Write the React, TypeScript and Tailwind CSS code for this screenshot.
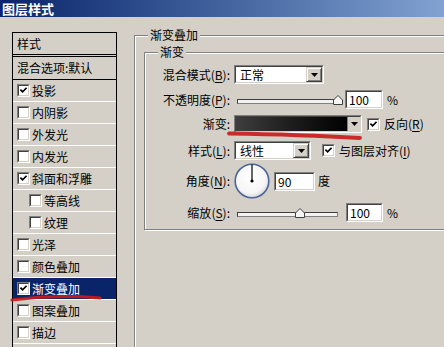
import type { ReactNode } from 'react'
import clsx from 'clsx'

const ITEMS = [
  { label: '投影', on: true },
  { label: '内阴影' },
  { label: '外发光' },
  { label: '内发光' },
  { label: '斜面和浮雕', on: true },
  { label: '等高线', indent: true },
  { label: '纹理', indent: true },
  { label: '光泽' },
  { label: '颜色叠加' },
  { label: '渐变叠加', on: true, active: true },
  { label: '图案叠加' },
  { label: '描边' },
]

function Check({ on }: { on?: boolean }) {
  return (
    <span className="flex h-[13px] w-[13px] shrink-0 border border-t-[#808080] border-l-[#808080] border-b-white border-r-white">
      <span className="flex flex-1 items-center justify-center bg-white border border-t-[#404040] border-l-[#404040] border-b-[#d4d0c8] border-r-[#d4d0c8]">
        {on && (
          <svg width="7" height="7" viewBox="0 0 7 7">
            <path d="M0.4 2.6 L2.6 4.9 L6.6 0.8" stroke="#000" strokeWidth="1.7" fill="none" />
          </svg>
        )}
      </span>
    </span>
  )
}

function Sunken({ className, children }: { className?: string; children?: ReactNode }) {
  return (
    <div className={clsx('flex shrink-0 border border-t-[#808080] border-l-[#808080] border-b-white border-r-white', className)}>
      <div className="flex flex-1 min-w-0 bg-white border border-t-[#404040] border-l-[#404040] border-b-[#d4d0c8] border-r-[#d4d0c8]">
        {children}
      </div>
    </div>
  )
}

function Arrow() {
  return (
    <svg width="7" height="4" viewBox="0 0 7 4">
      <path d="M0 0h7L3.5 4z" fill="#000" />
    </svg>
  )
}

function DropBtn() {
  return (
    <span className="flex w-[16px] shrink-0 items-center justify-center bg-[#d4d0c8] border border-t-[#d4d0c8] border-l-[#d4d0c8] border-r-[#404040] border-b-[#404040] shadow-[inset_1px_1px_0_#fff,inset_-1px_-1px_0_#808080]">
      <Arrow />
    </span>
  )
}

function Select({ value, className }: { value: string; className: string }) {
  return (
    <Sunken className={clsx('h-[19px]', className)}>
      <span className="flex-1 pl-[4px] leading-[15px]">{value}</span>
      <DropBtn />
    </Sunken>
  )
}

function Field({ value, className }: { value: string; className: string }) {
  return (
    <Sunken className={clsx('h-[19px]', className)}>
      <span className="pl-[2px] leading-[15px]">{value}</span>
    </Sunken>
  )
}

function Slider({ pos }: { pos: number }) {
  return (
    <div className="relative ml-[3px] flex h-[19px] w-[101px] shrink-0 items-center">
      <div className="mt-[3px] h-[5px] w-full bg-[#f2f2f2] border border-t-[#404040] border-l-[#404040] border-b-[#808080] border-r-[#808080]" />
      <svg
        className="absolute top-[5px]"
        style={{ left: pos }}
        width="10"
        height="10"
        viewBox="0 0 10 10"
      >
        <path d="M0.5 9.5 V5 L5 0.5 L9.5 5 V9.5 Z" fill="#f4f4f4" stroke="#404040" />
      </svg>
    </div>
  )
}

function Label({ text, k }: { text: string; k?: string }) {
  return (
    <span className="w-[85px] shrink-0 text-right">
      {text}
      {k && (
        <>
          (<span className="underline underline-offset-2">{k}</span>)
        </>
      )}
      :
    </span>
  )
}

function Group({ title, className, children }: { title: string; className: string; children?: ReactNode }) {
  return (
    <div className={clsx('relative border border-[#808080] shadow-[inset_1px_1px_0_#fff,1px_1px_0_#fff]', className)}>
      <span className="absolute -top-[9px] left-[13px] bg-[#d4d0c8] px-[2px] leading-[16px]">{title}</span>
      {children}
    </div>
  )
}

export default function App() {
  return (
    <div className="relative h-[347px] w-[444px] overflow-hidden bg-[#d4d0c8] text-[12px] leading-[16px] text-black font-['Noto_Sans_CJK_SC',sans-serif]">
      <div className="flex h-[17px] items-center bg-linear-to-r from-[#0a246a] to-[#82a2d2] pl-[2px] text-[13px] font-bold text-white">
        图层样式
      </div>

      <div className="flex">
        {/* style list */}
        <div className="ml-[12px] mt-[15px] h-[330px] w-[105px] shrink-0 border border-black">
          <div className="flex h-[22px] items-center border-b border-black pl-[4px]">样式</div>
          <div className="mt-[1px] flex h-[24px] items-center border-y border-black pl-[4px]">混合选项:默认</div>
          {ITEMS.map((it) => (
            <div
              key={it.label}
              className={clsx(
                'flex h-[22px] items-center gap-[2px] border-b border-white',
                it.indent ? 'pl-[16px]' : 'pl-[4px]',
                it.active && 'bg-[#0a246a] text-white',
              )}
            >
              <Check on={it.on} />
              <span>{it.label}</span>
            </div>
          ))}
        </div>

        {/* settings */}
        <Group title="渐变叠加" className="ml-[17px] mt-[18px] h-[340px] w-[320px] shrink-0">
          <Group title="渐变" className="ml-[9px] mt-[16px] h-[178px] w-[310px]">
            <div className="mt-[12px] flex flex-col">
              <div className="flex h-[19px] items-center">
                <Label text="混合模式" k="B" />
                <Select value="正常" className="ml-[4px] w-[90px]" />
              </div>

              <div className="mt-[6px] flex h-[19px] items-center">
                <Label text="不透明度" k="P" />
                <div className="ml-[4px] flex items-center">
                  <Slider pos={96} />
                  <Field value="100" className="ml-[7px] w-[38px]" />
                  <span className="ml-[4px]">%</span>
                </div>
              </div>

              <div className="mt-[6px] flex h-[18px] items-center">
                <Label text="渐变" />
                <Sunken className="ml-[4px] h-[18px] w-[128px]">
                  <span className="flex-1 bg-linear-to-r from-[#3e3e3e] to-[#030303]" />
                  <span className="flex w-[13px] items-center justify-center bg-[#d4d0c8] border-l border-[#808080]">
                    <Arrow />
                  </span>
                </Sunken>
                <span className="ml-[5px] flex items-center gap-[4px]">
                  <Check on />
                  <span>
                    反向(<span className="underline underline-offset-2">R</span>)
                  </span>
                </span>
              </div>

              <div className="mt-[8px] flex h-[19px] items-center">
                <Label text="样式" k="L" />
                <Select value="线性" className="ml-[4px] w-[77px]" />
                <span className="ml-[11px] flex items-center gap-[4px]">
                  <Check on />
                  <span>
                    与图层对齐(<span className="underline underline-offset-2">I</span>)
                  </span>
                </span>
              </div>

              <div className="mt-[3px] flex h-[36px] items-center">
                <Label text="角度" k="N" />
                <svg className="ml-[4px] shrink-0" width="36" height="36" viewBox="0 0 36 36">
                  <defs>
                    <radialGradient id="dial" cx="0.45" cy="0.4" r="0.6">
                      <stop offset="0" stopColor="#ffffff" />
                      <stop offset="0.75" stopColor="#f6f6f6" />
                      <stop offset="1" stopColor="#d8d8d8" />
                    </radialGradient>
                  </defs>
                  <circle cx="18" cy="18" r="16.8" fill="url(#dial)" stroke="#4c6699" strokeWidth="1.6" />
                  <line x1="18" y1="18" x2="18" y2="1.5" stroke="#000" strokeWidth="1.2" />
                  <circle cx="18" cy="18" r="1.6" fill="#000" />
                </svg>
                <Field value="90" className="ml-[4px] w-[41px]" />
                <span className="ml-[3px]">度</span>
              </div>

              <div className="mt-[4px] flex h-[19px] items-center">
                <Label text="缩放" k="S" />
                <div className="ml-[4px] flex items-center">
                  <Slider pos={58} />
                  <Field value="100" className="ml-[8px] w-[37px]" />
                  <span className="ml-[4px]">%</span>
                </div>
              </div>
            </div>
          </Group>
        </Group>
      </div>

      {/* red hand-drawn marks */}
      <svg className="pointer-events-none absolute inset-0" width="444" height="347" viewBox="0 0 444 347">
        <path d="M12 300 C 35 297, 65 295, 100 298" stroke="#c81c1c" strokeWidth="3.2" fill="none" strokeLinecap="round" opacity="0.92" />
        <path d="M229 133.5 C 265 134, 310 135, 360 138" stroke="#c81c1c" strokeWidth="3.8" fill="none" strokeLinecap="round" opacity="0.92" />
      </svg>
    </div>
  )
}
